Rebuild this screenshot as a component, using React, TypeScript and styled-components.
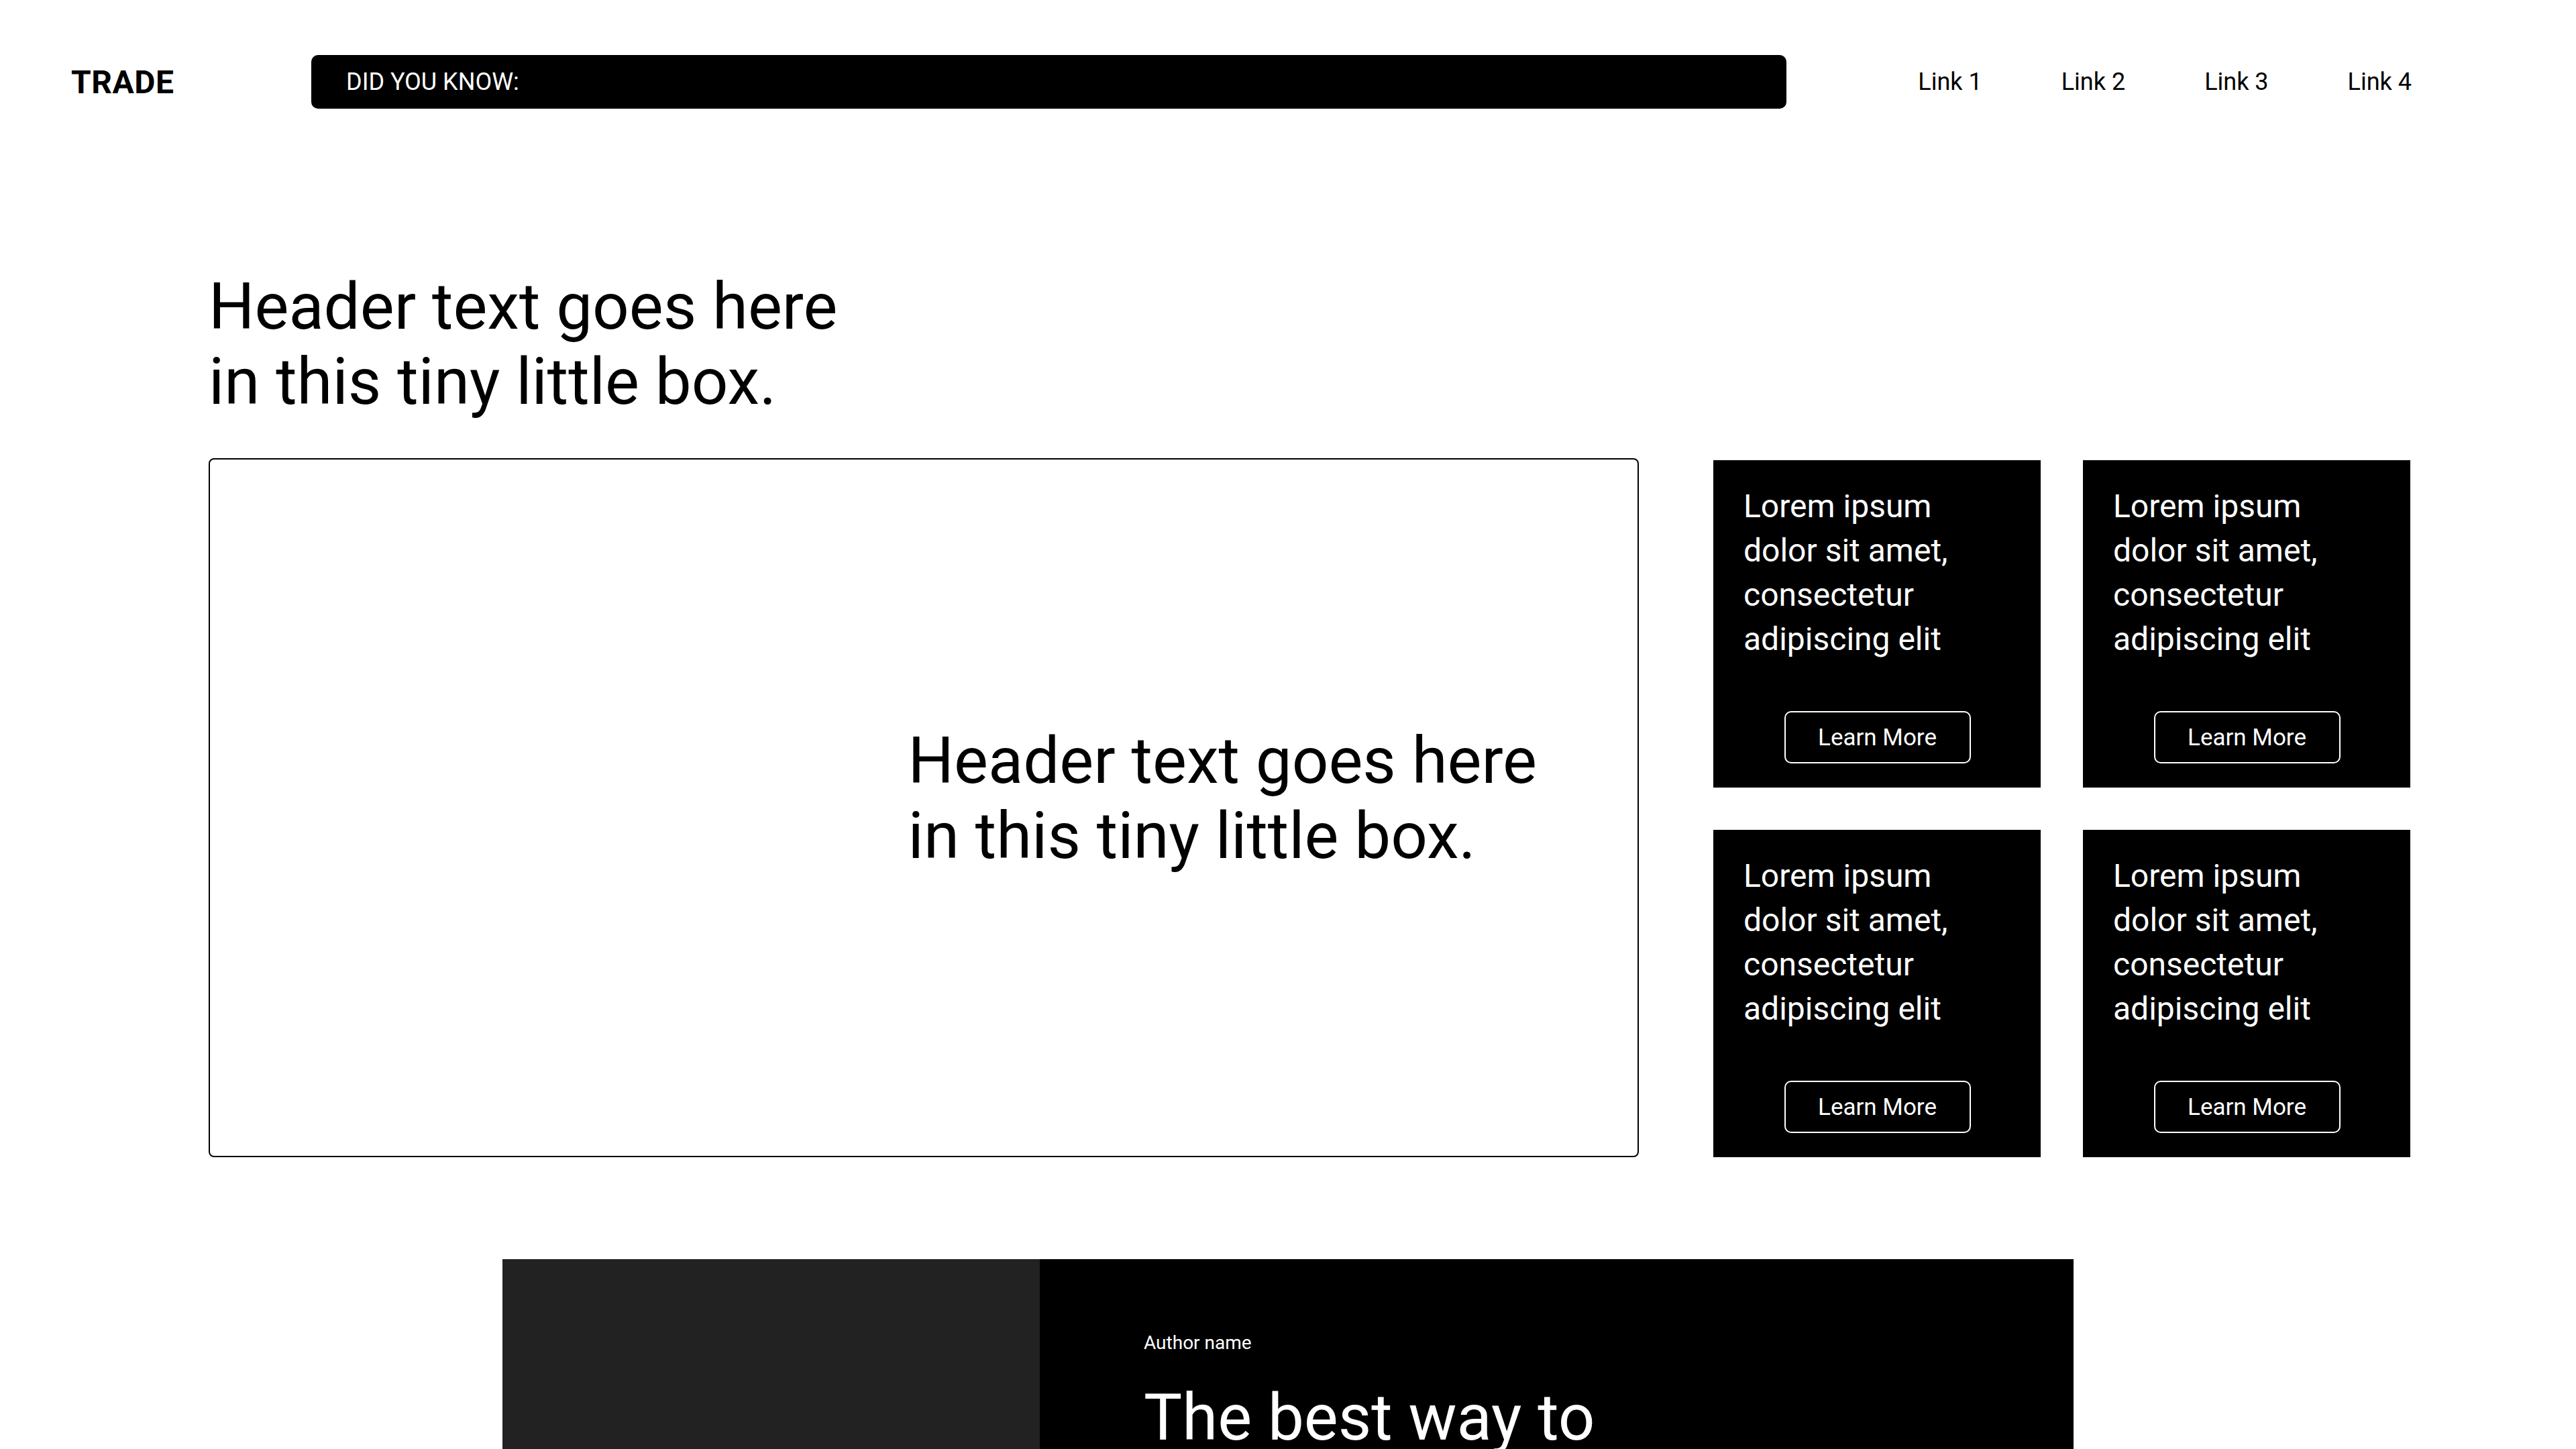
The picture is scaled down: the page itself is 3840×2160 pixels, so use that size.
import styled, { createGlobalStyle } from "styled-components";

const GlobalStyle = createGlobalStyle`
  * {
    box-sizing: border-box;
  }
  body {
    margin: 0;
    background: #ffffff;
    font-family: Roboto, "Liberation Sans", Arial, sans-serif;
    color: #000000;
  }
`;

const cards = [1, 2, 3, 4];
const links = ["Link 1", "Link 2", "Link 3", "Link 4"];

export default function App() {
  return (
    <>
      <GlobalStyle />
      <Page>
        <Nav>
          <Logo>TRADE</Logo>
          <Ticker>DID YOU KNOW:</Ticker>
          <NavLinks>
            {links.map((l) => (
              <NavLink key={l} href="#">
                {l}
              </NavLink>
            ))}
          </NavLinks>
        </Nav>

        <Main>
          <Headline>
            Header text goes here
            <br />
            in this tiny little box.
          </Headline>
          <ContentRow>
            <FeatureBox>
              <Headline>
                Header text goes here
                <br />
                in this tiny little box.
              </Headline>
            </FeatureBox>
            <CardGrid>
              {cards.map((c) => (
                <Card key={c}>
                  <CardText>
                    Lorem ipsum
                    <br />
                    dolor sit amet,
                    <br />
                    consectetur
                    <br />
                    adipiscing elit
                  </CardText>
                  <CardButton>Learn More</CardButton>
                </Card>
              ))}
            </CardGrid>
          </ContentRow>
        </Main>

        <Quote>
          <QuoteImage />
          <QuoteBody>
            <Author>Author name</Author>
            <QuoteTitle>The best way to</QuoteTitle>
          </QuoteBody>
        </Quote>
      </Page>
    </>
  );
}

const Page = styled.div`
  width: 3840px;
  min-height: 2160px;
  overflow: hidden;
`;

const Nav = styled.header`
  display: flex;
  align-items: center;
  height: 80px;
  margin-top: 82px;
  padding: 0 245px 0 106px;
`;

const Logo = styled.div`
  flex: 0 0 358px;
  font-size: 48px;
  font-weight: 700;
  letter-spacing: 0.5px;
`;

const Ticker = styled.div`
  display: flex;
  align-items: center;
  width: 2199px;
  height: 80px;
  padding-left: 52px;
  background: #000000;
  border-radius: 10px;
  color: #ffffff;
  font-size: 36px;
`;

const NavLinks = styled.nav`
  display: flex;
  gap: 118px;
  margin-left: auto;
`;

const NavLink = styled.a`
  font-size: 36px;
  color: #000000;
  text-decoration: none;
`;

const Main = styled.main`
  padding: 0 247px 0 311px;
  margin-top: 239px;
`;

const Headline = styled.h1`
  margin: 0;
  font-size: 96px;
  line-height: 112px;
  font-weight: 400;
  white-space: nowrap;
`;

const ContentRow = styled.section`
  display: grid;
  grid-template-columns: 2132px 1039px;
  gap: 111px;
  margin-top: 58px;
`;

const FeatureBox = styled.div`
  display: flex;
  align-items: center;
  justify-content: flex-end;
  padding: 0 150px 28px 0;
  border: 2px solid #000000;
  border-radius: 8px;
`;

const CardGrid = styled.div`
  display: grid;
  grid-template-columns: repeat(2, 488px);
  grid-auto-rows: 488px;
  column-gap: 63px;
  row-gap: 63px;
  padding-top: 3px;
`;

const Card = styled.article`
  display: flex;
  flex-direction: column;
  justify-content: space-between;
  align-items: center;
  padding: 36px 44px 36px 45px;
  background: #000000;
  color: #ffffff;
`;

const CardText = styled.p`
  align-self: stretch;
  margin: 0;
  font-size: 48px;
  line-height: 66px;
`;

const CardButton = styled.button`
  width: 278px;
  height: 78px;
  background: transparent;
  border: 2px solid #ffffff;
  border-radius: 10px;
  color: #ffffff;
  font-family: inherit;
  font-size: 35px;
`;

const Quote = styled.section`
  display: flex;
  width: 2342px;
  height: 640px;
  margin: 152px auto 0;
`;

const QuoteImage = styled.div`
  flex: 0 0 801px;
  background: #222222;
`;

const QuoteBody = styled.div`
  flex: 1;
  padding: 108px 0 0 155px;
  background: #000000;
  color: #ffffff;
`;

const Author = styled.div`
  font-size: 28px;
  line-height: 34px;
`;

const QuoteTitle = styled.h2`
  margin: 38px 0 0;
  font-size: 96px;
  line-height: 112px;
  font-weight: 400;
`;
